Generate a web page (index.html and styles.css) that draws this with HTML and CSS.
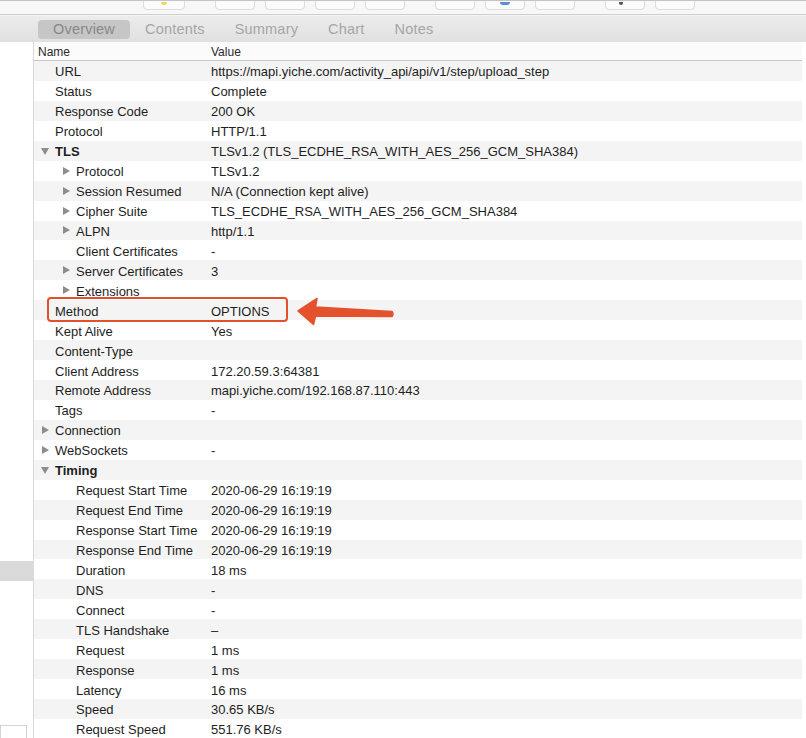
FILE: index.html
```html
<!DOCTYPE html>
<html>
<head>
<meta charset="utf-8">
<link rel="stylesheet" href="styles.css">
</head>
<body>
<div class="toolbar">
  <span class="tbtn w55"><i class="dot yellow"></i></span>
  <span class="tbtn"></span>
  <span class="tbtn"></span>
  <span class="tbtn"></span>
  <span class="tbtn"></span>
  <span class="tbtn gap"></span>
  <span class="tbtn"><i class="dot blue"></i></span>
  <span class="tbtn"></span>
  <span class="tbtn gap"><i class="dot dark"></i></span>
  <span class="tbtn"></span>
</div>
<div class="tabbar">
  <span class="tab active">Overview</span>
  <span class="tab">Contents</span>
  <span class="tab">Summary</span>
  <span class="tab">Chart</span>
  <span class="tab">Notes</span>
</div>
<div class="content">
  <div class="sidebar">
    <div class="side-sel"></div>
    <div class="side-search"></div>
  </div>
  <div class="main">
    <div class="header"><span class="hname">Name</span><span class="hval">Value</span></div>
    <div class="rows">
      <div class="row"><span class="name l0"><i class="tg"></i>URL</span><span class="val">https://mapi.yiche.com/activity_api/api/v1/step/upload_step</span></div>
      <div class="row"><span class="name l0"><i class="tg"></i>Status</span><span class="val">Complete</span></div>
      <div class="row"><span class="name l0"><i class="tg"></i>Response Code</span><span class="val">200 OK</span></div>
      <div class="row"><span class="name l0"><i class="tg"></i>Protocol</span><span class="val">HTTP/1.1</span></div>
      <div class="row"><span class="name l0 bold"><i class="tg down"></i>TLS</span><span class="val">TLSv1.2 (TLS_ECDHE_RSA_WITH_AES_256_GCM_SHA384)</span></div>
      <div class="row"><span class="name l1"><i class="tg right"></i>Protocol</span><span class="val">TLSv1.2</span></div>
      <div class="row"><span class="name l1"><i class="tg right"></i>Session Resumed</span><span class="val">N/A (Connection kept alive)</span></div>
      <div class="row"><span class="name l1"><i class="tg right"></i>Cipher Suite</span><span class="val">TLS_ECDHE_RSA_WITH_AES_256_GCM_SHA384</span></div>
      <div class="row"><span class="name l1"><i class="tg right"></i>ALPN</span><span class="val">http/1.1</span></div>
      <div class="row"><span class="name l1"><i class="tg"></i>Client Certificates</span><span class="val">-</span></div>
      <div class="row"><span class="name l1"><i class="tg right"></i>Server Certificates</span><span class="val">3</span></div>
      <div class="row"><span class="name l1"><i class="tg right"></i>Extensions</span><span class="val"></span></div>
      <div class="row"><span class="name l0"><i class="tg"></i>Method</span><span class="val">OPTIONS</span></div>
      <div class="row"><span class="name l0"><i class="tg"></i>Kept Alive</span><span class="val">Yes</span></div>
      <div class="row"><span class="name l0"><i class="tg"></i>Content-Type</span><span class="val"></span></div>
      <div class="row"><span class="name l0"><i class="tg"></i>Client Address</span><span class="val">172.20.59.3:64381</span></div>
      <div class="row"><span class="name l0"><i class="tg"></i>Remote Address</span><span class="val">mapi.yiche.com/192.168.87.110:443</span></div>
      <div class="row"><span class="name l0"><i class="tg"></i>Tags</span><span class="val">-</span></div>
      <div class="row"><span class="name l0"><i class="tg right"></i>Connection</span><span class="val"></span></div>
      <div class="row"><span class="name l0"><i class="tg right"></i>WebSockets</span><span class="val">-</span></div>
      <div class="row"><span class="name l0 bold"><i class="tg down"></i>Timing</span><span class="val"></span></div>
      <div class="row"><span class="name l1"><i class="tg"></i>Request Start Time</span><span class="val">2020-06-29 16:19:19</span></div>
      <div class="row"><span class="name l1"><i class="tg"></i>Request End Time</span><span class="val">2020-06-29 16:19:19</span></div>
      <div class="row"><span class="name l1"><i class="tg"></i>Response Start Time</span><span class="val">2020-06-29 16:19:19</span></div>
      <div class="row"><span class="name l1"><i class="tg"></i>Response End Time</span><span class="val">2020-06-29 16:19:19</span></div>
      <div class="row"><span class="name l1"><i class="tg"></i>Duration</span><span class="val">18 ms</span></div>
      <div class="row"><span class="name l1"><i class="tg"></i>DNS</span><span class="val">-</span></div>
      <div class="row"><span class="name l1"><i class="tg"></i>Connect</span><span class="val">-</span></div>
      <div class="row"><span class="name l1"><i class="tg"></i>TLS Handshake</span><span class="val">–</span></div>
      <div class="row"><span class="name l1"><i class="tg"></i>Request</span><span class="val">1 ms</span></div>
      <div class="row"><span class="name l1"><i class="tg"></i>Response</span><span class="val">1 ms</span></div>
      <div class="row"><span class="name l1"><i class="tg"></i>Latency</span><span class="val">16 ms</span></div>
      <div class="row"><span class="name l1"><i class="tg"></i>Speed</span><span class="val">30.65 KB/s</span></div>
      <div class="row"><span class="name l1"><i class="tg"></i>Request Speed</span><span class="val">551.76 KB/s</span></div>
    </div>
  </div>
</div>
<div class="highlight"></div>
<svg class="arrow" width="110" height="40" viewBox="0 0 110 40">
  <path d="M2 15 L21 2.5 L19.5 11 L96 15.5 Q98 18 96 20.5 L19.5 20 L17.5 28.5 Z" fill="#e4522d" stroke="#e4522d" stroke-width="1.5" stroke-linejoin="round"/>
</svg>
</body>
</html>
```

FILE: styles.css
```css
html, body {
  margin: 0;
  padding: 0;
  background: #ffffff;
  overflow: hidden;
}
body {
  width: 806px;
  height: 738px;
  font-family: "Liberation Sans", Arial, sans-serif;
  color: #1e1e1e;
  position: relative;
}
.toolbar {
  border-top: 1px solid #c4c4c4;
  border-bottom: 1px solid #cfcfcf;
  background: #f7f7f7;
  box-sizing: border-box;
  height: 15px;
  overflow: hidden;
  display: flex;
  padding-left: 143px;
  gap: 10px;
}
.tbtn {
  display: block;
  width: 38px;
  height: 20px;
  margin-top: -13px;
  border: 1px solid #dcdcdc;
  border-radius: 4px;
  background: #fbfbfb;
  position: relative;
  flex: none;
}
.tbtn.w55 { width: 40px; margin-right: 20px; }
.tbtn.gap { margin-left: 20px; }
.dot {
  position: absolute;
  left: 50%;
  bottom: 4px;
  width: 6px;
  height: 3px;
  margin-left: -3px;
  border-radius: 0 0 3px 3px;
}
.dot.yellow { background: #e9d66a; }
.dot.blue { background: #5b8fd6; width: 10px; margin-left: -5px; }
.dot.dark { background: #555; width: 4px; margin-left: -6px; }
.tabbar {
  height: 27px;
  box-sizing: border-box;
  background: linear-gradient(#ececec, #e0e0e0);
  border-top: 1px solid #f4f4f4;
  display: flex;
  align-items: center;
  padding-left: 38px;
  padding-top: 1px;
}
.tab {
  font-size: 14.5px;
  letter-spacing: 0.2px;
  color: #a5a5a5;
  padding: 0 15px;
  height: 19px;
  line-height: 19px;
  border-radius: 4px;
}
.tab.active {
  background: #c6c6c6;
  color: #888888;
}
.content {
  display: flex;
  height: 696px;
}
.sidebar {
  width: 33px;
  border-right: 1px solid #d9d9d9;
  display: flex;
  flex-direction: column;
  flex: none;
}
.side-sel {
  margin-top: 519px;
  height: 20px;
  background: #dadada;
}
.side-search {
  margin-top: auto;
  height: 12px;
  width: 25px;
  border: 1px solid #d4d4d4;
  border-bottom: none;
  background: #fff;
}
.main {
  flex: 1;
  padding-right: 4px;
  min-width: 0;
}
.header {
  height: 18px;
  border-bottom: 1px solid #c6c6c6;
  background: #fbfbfb;
  display: flex;
  align-items: center;
  font-size: 12px;
  color: #2a2a2a;
  padding-top: 1px;
  box-sizing: border-box;
  height: 19px;
}
.hname {
  width: 173px;
  padding-left: 4px;
  box-sizing: border-box;
}
.hval {
  padding-left: 4px;
}
.row {
  height: 19.94px;
  box-sizing: border-box;
  padding-top: 2px;
  display: flex;
  align-items: center;
  font-size: 13px;
  white-space: nowrap;
}
.row:nth-child(odd) {
  background: #f4f4f4;
}
.name {
  width: 173px;
  flex: none;
  display: flex;
  align-items: center;
  box-sizing: border-box;
}
.name.l0 { padding-left: 7px; }
.name.l1 { padding-left: 28px; }
.name.bold { font-weight: bold; }
.val {
  padding-left: 4px;
}
.tg {
  display: inline-block;
  width: 14px;
  height: 10px;
  position: relative;
  flex: none;
}
.tg.right::before {
  content: "";
  position: absolute;
  left: 1px;
  top: 0;
  border-left: 7px solid #8d8d8d;
  border-top: 4px solid transparent;
  border-bottom: 4px solid transparent;
}
.tg.down::before {
  content: "";
  position: absolute;
  left: 0;
  top: 1px;
  border-top: 7px solid #8d8d8d;
  border-left: 4px solid transparent;
  border-right: 4px solid transparent;
}
.highlight {
  position: absolute;
  left: 47px;
  top: 297px;
  width: 241px;
  height: 25px;
  box-sizing: border-box;
  border: 2px solid #e2502d;
  border-radius: 4px;
}
.arrow {
  position: absolute;
  left: 296px;
  top: 296px;
}
```
